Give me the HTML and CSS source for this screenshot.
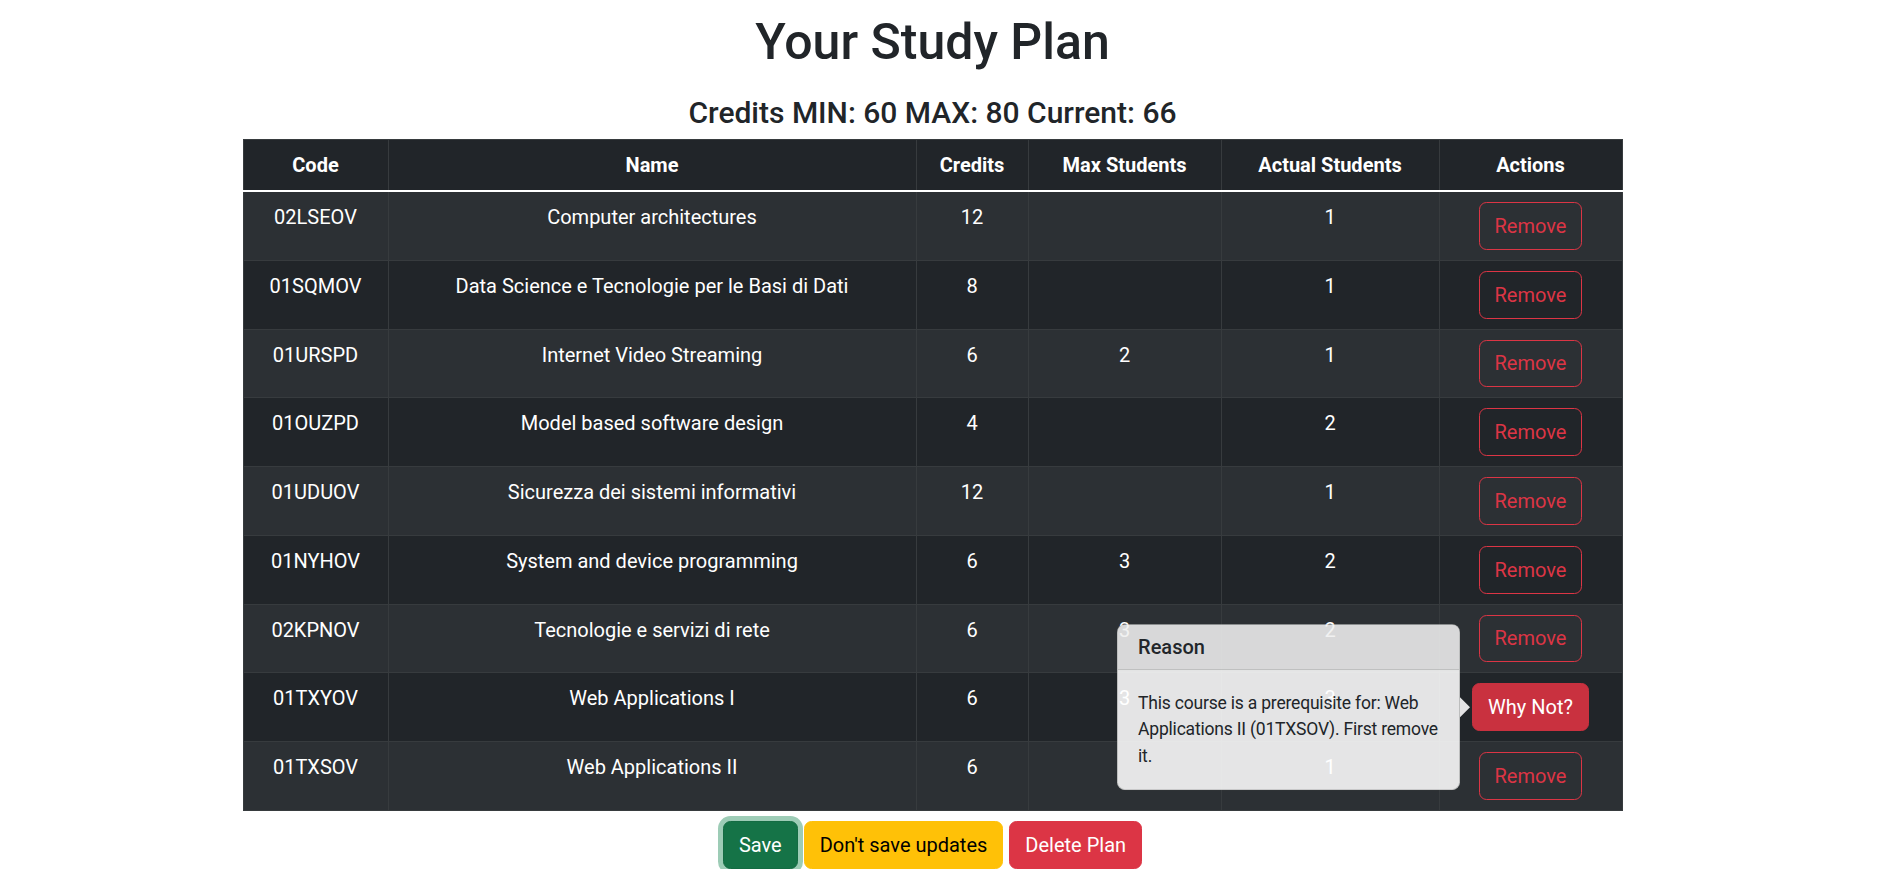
FILE: index.html
```html
<!DOCTYPE html>
<html lang="en">
<head>
<meta charset="utf-8">
<title>Your Study Plan</title>
<link rel="stylesheet" href="styles.css">
</head>
<body>
<main class="page">
  <h1 class="title">Your Study Plan</h1>
  <h4 class="credits">Credits MIN: 60 MAX: 80 Current: 66</h4>
  <table class="plan">
    <colgroup>
      <col class="c-code"><col class="c-name"><col class="c-cred"><col class="c-max"><col class="c-act"><col class="c-actions">
    </colgroup>
    <thead>
      <tr><th>Code</th><th>Name</th><th>Credits</th><th>Max Students</th><th>Actual Students</th><th>Actions</th></tr>
    </thead>
    <tbody>
      <tr><td>02LSEOV</td><td>Computer architectures</td><td>12</td><td></td><td>1</td><td><button class="btn btn-outline-danger">Remove</button></td></tr>
      <tr><td>01SQMOV</td><td>Data Science e Tecnologie per le Basi di Dati</td><td>8</td><td></td><td>1</td><td><button class="btn btn-outline-danger">Remove</button></td></tr>
      <tr><td>01URSPD</td><td>Internet Video Streaming</td><td>6</td><td>2</td><td>1</td><td><button class="btn btn-outline-danger">Remove</button></td></tr>
      <tr><td>01OUZPD</td><td>Model based software design</td><td>4</td><td></td><td>2</td><td><button class="btn btn-outline-danger">Remove</button></td></tr>
      <tr><td>01UDUOV</td><td>Sicurezza dei sistemi informativi</td><td>12</td><td></td><td>1</td><td><button class="btn btn-outline-danger">Remove</button></td></tr>
      <tr><td>01NYHOV</td><td>System and device programming</td><td>6</td><td>3</td><td>2</td><td><button class="btn btn-outline-danger">Remove</button></td></tr>
      <tr><td>02KPNOV</td><td>Tecnologie e servizi di rete</td><td>6</td><td>3</td><td>2</td><td><button class="btn btn-outline-danger">Remove</button></td></tr>
      <tr><td>01TXYOV</td><td>Web Applications I</td><td>6</td><td>3</td><td>3</td><td>
        <span class="why">
          <button class="btn btn-why">Why Not?</button>
          <span class="popover">
            <span class="popover-arrow"></span>
            <span class="popover-header">Reason</span>
            <span class="popover-body">This course is a prerequisite for: Web Applications II (01TXSOV). First remove it.</span>
          </span>
        </span>
      </td></tr>
      <tr><td>01TXSOV</td><td>Web Applications II</td><td>6</td><td></td><td>1</td><td><button class="btn btn-outline-danger">Remove</button></td></tr>
    </tbody>
  </table>
  <div class="actions">
    <button class="btn btn-save">Save</button>
    <button class="btn btn-warning">Don't save updates</button>
    <button class="btn btn-danger">Delete Plan</button>
  </div>
</main>
</body>
</html>
```
FILE: styles.css
```css
* { box-sizing: border-box; }
html, body { margin: 0; padding: 0; }
body {
  font-family: Roboto, "Liberation Sans", sans-serif;
  font-size: 20px;
  line-height: 30px;
  color: #212529;
  background: #fff;
}
.page {
  padding: 12px 20px 0 0;
  display: flex;
  flex-direction: column;
  align-items: center;
}
.title {
  font-size: 50px;
  line-height: 60px;
  font-weight: 500;
  margin: 0 0 23px;
}
.credits {
  font-size: 30px;
  line-height: 36px;
  font-weight: 500;
  margin: 0 0 8px;
}
.plan {
  width: 1379px;
  border-collapse: collapse;
  table-layout: fixed;
  background: #212529;
  color: #fff;
}
.c-code { width: 145px; }
.c-name { width: 528px; }
.c-cred { width: 112px; }
.c-max { width: 193px; }
.c-act { width: 218px; }
.c-actions { width: 183px; }
.plan th, .plan td {
  border: 1px solid #373b3e;
  padding: 10px;
  text-align: center;
  vertical-align: top;
}
.plan thead th {
  font-weight: 700;
  border-bottom: 2px solid #fff;
}
.plan tbody tr:nth-child(odd) td { background: #2c3034; }

.btn {
  display: inline-block;
  font-family: inherit;
  font-size: 20px;
  line-height: 30px;
  padding: 7.875px 15px;
  border: 1px solid transparent;
  border-radius: 7.5px;
  background: transparent;
  cursor: pointer;
  vertical-align: top;
}
.btn-outline-danger { color: #dc3545; border-color: #dc3545; }
.btn-why { color: #fff; background: #c9313f; border-color: #c9313f; }
.btn-save {
  color: #fff;
  background: #157347;
  border-color: #146c43;
  box-shadow: 0 0 0 5px rgba(60, 153, 110, .5);
}
.btn-warning { color: #000; background: #ffc107; border-color: #ffc107; }
.btn-danger { color: #fff; background: #dc3545; border-color: #dc3545; }

.actions {
  display: flex;
  gap: 6px;
  justify-content: center;
  margin-top: 10px;
}

.why { position: relative; display: inline-block; }
.popover {
  position: absolute;
  right: calc(100% + 12px);
  top: 50%;
  transform: translateY(-50%);
  width: 343px;
  display: block;
  background: #fff;
  border: 1px solid rgba(0, 0, 0, .175);
  border-radius: 8px;
  opacity: .88;
  text-align: left;
  color: #212529;
  z-index: 10;
}
.popover-arrow {
  position: absolute;
  left: calc(100% + 1px);
  top: 50%;
  margin-top: -10px;
  width: 0;
  height: 0;
  border-left: 10px solid #fff;
  border-top: 10px solid transparent;
  border-bottom: 10px solid transparent;
}
.popover-header {
  display: block;
  background: #f0f0f0;
  border-bottom: 1px solid rgba(0, 0, 0, .175);
  border-radius: 7px 7px 0 0;
  padding: 10px 20px;
  font-size: 20px;
  line-height: 24px;
  font-weight: 500;
}
.popover-body {
  display: block;
  padding: 20px 16px 20px 20px;
  font-size: 17.5px;
  line-height: 26.25px;
  letter-spacing: -0.2px;
}
```
